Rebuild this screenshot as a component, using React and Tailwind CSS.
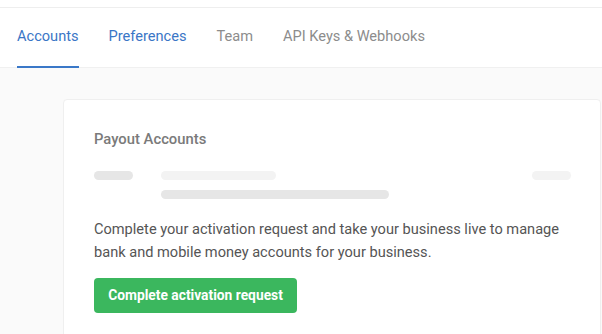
export default function App() {
  const tabs = [
    { label: "Accounts", active: true, color: "text-[#3a76c6]" },
    { label: "Preferences", active: false, color: "text-[#3a76c6]" },
    { label: "Team", active: false, color: "text-[#8c8c8c]" },
    { label: "API Keys & Webhooks", active: false, color: "text-[#8c8c8c]" },
  ];

  return (
    <div className="min-h-screen bg-[#fafafa] font-['Roboto',sans-serif] overflow-hidden">
      {/* Top strip */}
      <div className="h-[7px] bg-white border-b border-[#eeeeee] box-content" />

      {/* Tabs */}
      <div className="bg-white border-b border-[#f0f0f0] h-[60px] px-[17px] flex gap-[30px]">
        {tabs.map((tab) => (
          <div
            key={tab.label}
            className={`relative flex items-center pb-[2px] text-[14.6px] ${tab.color}`}
          >
            {tab.label}
            {tab.active && (
              <span className="absolute left-0 right-0 bottom-[-1px] h-[2px] bg-[#3a78c8]" />
            )}
          </div>
        ))}
      </div>

      {/* Card */}
      <div className="pt-[31px] pl-[63px] pr-[1px]">
        <div className="bg-white border border-[#efefef] rounded-[4px] px-[30px] pt-[28px] pb-[40px]">
          <h2 className="text-[14.8px] font-medium text-[#7a7a7a]">Payout Accounts</h2>

          {/* Skeleton */}
          <div className="mt-[21px] flex">
            <div className="w-[39px] h-[9px] rounded-full bg-[#e6e6e6]" />
            <div className="ml-[28px] flex-1 flex flex-col gap-[10px]">
              <div className="w-[115px] h-[9px] rounded-full bg-[#f3f3f3]" />
              <div className="w-[228px] h-[9px] rounded-full bg-[#e6e6e6]" />
            </div>
            <div className="w-[39px] h-[9px] rounded-full bg-[#f3f3f3] mr-[-1px]" />
          </div>

          <p className="mt-[19px] text-[14.6px] leading-[23px] text-[#555555]">
            Complete your activation request and take your business live to manage
            <br />
            bank and mobile money accounts for your business.
          </p>

          <button className="mt-[14px] w-[203px] h-[35px] rounded-[4px] bg-[#3bb75e] text-white text-[13.8px] font-bold">
            Complete activation request
          </button>
        </div>
      </div>
    </div>
  );
}
